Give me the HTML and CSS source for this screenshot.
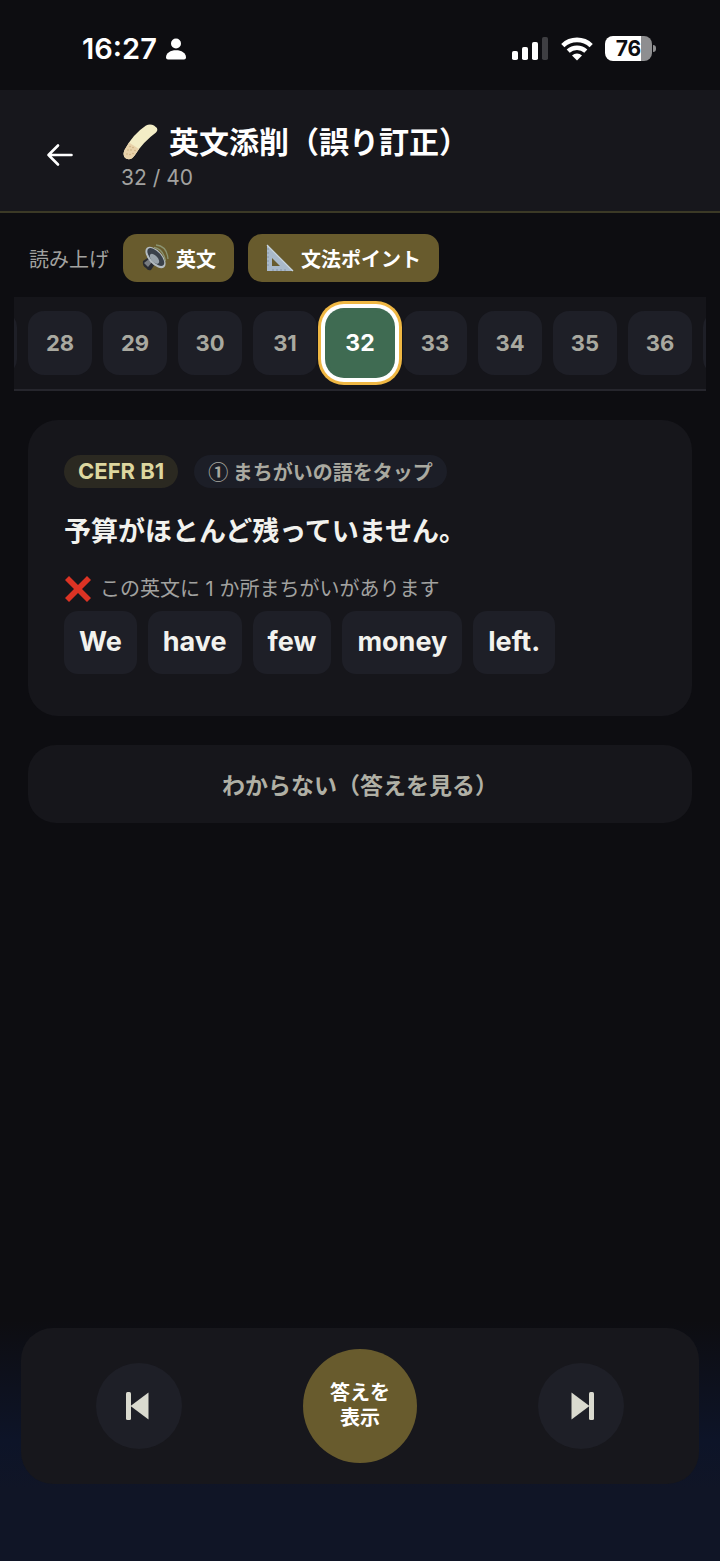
FILE: index.html
```html
<!DOCTYPE html>
<html lang="ja">
<head>
    <meta charset="UTF-8">
    <meta name="viewport" content="width=device-width, initial-scale=1.0">
    <title>英文添削（誤り訂正）</title>
    <link rel="stylesheet" href="styles.css">
</head>
<body>
    <!-- ステータスバー -->
    <div class="status-bar">
        <div class="status-left">
            <span class="clock">16:27</span>
            <svg width="20" height="22" viewBox="0 0 20 22" fill="#fff" aria-hidden="true">
                <circle cx="10" cy="5.5" r="5"/>
                <path d="M0 19.5C0 15 4.5 12.3 10 12.3S20 15 20 19.5Q20 21.5 18 21.5H2Q0 21.5 0 19.5Z"/>
            </svg>
        </div>
        <div class="status-right">
            <svg width="37" height="24" viewBox="0 0 37 24" fill="#fff" aria-hidden="true">
                <rect x="0" y="14" width="6" height="9" rx="1.8"/>
                <rect x="10" y="10" width="6" height="13" rx="1.8"/>
                <rect x="20" y="5" width="6" height="18" rx="1.8"/>
                <rect x="30" y="0" width="6" height="23" rx="1.8" fill="#3e3e42"/>
            </svg>
            <svg width="32" height="24" viewBox="0 0 32 24" aria-hidden="true">
                <path d="M1.8 8.6A20.5 20.5 0 0 1 30.2 8.6" fill="none" stroke="#fff" stroke-width="4.6"/>
                <path d="M7.2 14.2A12.8 12.8 0 0 1 24.8 14.2" fill="none" stroke="#fff" stroke-width="4.4"/>
                <path d="M11 18.4A7.2 7.2 0 0 1 21 18.4L16 23.4Z" fill="#fff"/>
            </svg>
            <div class="battery"><span class="battery-level">76</span></div>
        </div>
    </div>

    <header class="page-header">
        <button type="button" class="back-button" aria-label="戻る">
            <svg width="28" height="24" viewBox="0 0 28 24" fill="none" stroke="#fff" stroke-width="2.6" stroke-linecap="round" stroke-linejoin="round">
                <path d="M25.5 12H2.5M12 2.5L2.5 12L12 21.5"/>
            </svg>
        </button>
        <div class="header-text">
            <h1>
                <svg width="38" height="38" viewBox="0 0 38 38" aria-hidden="true">
                    <path d="M25 2.5Q29 .5 33 2.5Q38.5 6 35 9.5Q22 19 14 32Q10 38 5 35.5Q1 33 3.5 27Q12 11 25 2.5Z" fill="#f3edc6"/>
                    <path d="M8 19.5L18 26Q15.5 29.5 14 32Q10 38 5 35.5Q1 33 3.5 27Z" fill="#e8d2aa"/>
                    <g fill="#c4a878">
                        <circle cx="9" cy="23.5" r=".7"/><circle cx="14" cy="27.5" r=".7"/>
                        <circle cx="7" cy="27" r=".7"/><circle cx="12" cy="30.5" r=".7"/>
                        <circle cx="6" cy="31" r=".7"/><circle cx="10" cy="27" r=".7"/>
                        <circle cx="9" cy="31.5" r=".7"/><circle cx="12" cy="24.5" r=".7"/>
                    </g>
                </svg>
                英文添削（誤り訂正）
            </h1>
            <p class="progress">32 / 40</p>
        </div>
    </header>

    <main>
        <!-- 読み上げ -->
        <div class="speech-row">
            <span class="speech-label">読み上げ</span>
            <button type="button" class="speech-button">
                <svg width="28" height="28" viewBox="0 0 28 28" aria-hidden="true">
                    <path d="M2 17L8 13L14 20L10 26Q7 27 5 24Q1 22 2 17Z" fill="#292b30"/>
                    <path d="M3 19L8 15L11 18L7 23Z" fill="#777b80"/>
                    <ellipse cx="14.5" cy="13.5" rx="6.8" ry="13" transform="rotate(-42 14.5 13.5)" fill="#b4bcc1"/>
                    <ellipse cx="14.8" cy="13" rx="5.2" ry="11.2" transform="rotate(-42 14.8 13)" fill="#3a414a"/>
                    <ellipse cx="13.5" cy="14.8" rx="3.2" ry="6" transform="rotate(-42 13.5 14.8)" fill="#99a3aa"/>
                    <path d="M13 3.5Q22 4.5 24.5 17" fill="none" stroke="#8b9472" stroke-width="1.3"/>
                    <path d="M15 1Q26 2 27 15" fill="none" stroke="#8b9472" stroke-width="1.3"/>
                </svg>
                英文
            </button>
            <button type="button" class="speech-button">
                <svg width="28" height="28" viewBox="0 0 28 28" aria-hidden="true">
                    <path d="M1 1L27 27H1ZM6 14V22H14Z" fill="#a9b9ca" fill-rule="evenodd"/>
                    <path d="M1 1L27 27" stroke="#c9d5df" stroke-width="1.2"/>
                    <path d="M1 5H3M1 9H3M1 13H3M1 17H3M1 21H3M7 27V25M11 27V25M15 27V25M19 27V25" stroke="#7d8d9f" stroke-width=".8"/>
                </svg>
                文法ポイント
            </button>
        </div>

        <!-- 問題番号 -->
        <nav class="number-strip" aria-label="問題番号">
            <button type="button" class="number" aria-label="27"></button>
            <button type="button" class="number">28</button>
            <button type="button" class="number">29</button>
            <button type="button" class="number">30</button>
            <button type="button" class="number">31</button>
            <button type="button" class="number current" aria-current="true">32</button>
            <button type="button" class="number">33</button>
            <button type="button" class="number">34</button>
            <button type="button" class="number">35</button>
            <button type="button" class="number">36</button>
            <button type="button" class="number" aria-label="37"></button>
        </nav>

        <!-- 問題カード -->
        <section class="card">
            <div class="tags">
                <span class="tag level">CEFR B1</span>
                <span class="tag">① まちがいの語をタップ</span>
            </div>
            <h2>予算がほとんど残っていません。</h2>
            <p class="hint">
                <svg width="28" height="28" viewBox="0 0 28 28" aria-hidden="true">
                    <path d="M5 1L14 10L23 1L27 5L18 14L27 23L23 27L14 18L5 27L1 23L10 14L1 5Z" fill="#dc3324"/>
                </svg>
                この英文に 1 か所まちがいがあります
            </p>
            <div class="words">
                <button type="button" class="word">We</button>
                <button type="button" class="word">have</button>
                <button type="button" class="word">few</button>
                <button type="button" class="word">money</button>
                <button type="button" class="word">left.</button>
            </div>
        </section>

        <button type="button" class="give-up">わからない（答えを見る）</button>
    </main>

    <!-- 下部の操作バー -->
    <footer class="dock">
        <div class="controls">
            <button type="button" class="skip" aria-label="前の問題">
                <svg width="28" height="28" viewBox="0 0 28 28" fill="#dadacf">
                    <rect x="1" y="0" width="5" height="28" rx="1.5"/>
                    <path d="M23.5 .5V27.5L5.5 14Z"/>
                </svg>
            </button>
            <button type="button" class="show-answer">答えを<br>表示</button>
            <button type="button" class="skip" aria-label="次の問題">
                <svg width="28" height="28" viewBox="0 0 28 28" fill="#dadacf">
                    <rect x="22" y="0" width="5" height="28" rx="1.5"/>
                    <path d="M4.5 .5V27.5L22.5 14Z"/>
                </svg>
            </button>
        </div>
    </footer>
</body>
</html>
```
FILE: styles.css
```css
* {
    box-sizing: border-box;
}
body {
    font-family: Inter, 'Noto Sans CJK JP', sans-serif;
    margin: 0;
    min-height: 100vh;
    display: flex;
    flex-direction: column;
    background-color: #0d0d11;
    color: #f2f2ee;
}
h1, h2, p {
    margin: 0;
}
svg {
    display: block;
    flex: none;
}
button {
    font-family: inherit;
    border: none;
    padding: 0;
    cursor: pointer;
}

/* ステータスバー */
.status-bar {
    height: 90px;
    padding: 7px 68px 0 82px;
    display: flex;
    align-items: center;
    justify-content: space-between;
    color: #fff;
}
.status-left {
    display: flex;
    align-items: center;
    gap: 9px;
}
.status-right {
    display: flex;
    align-items: center;
    gap: 12px;
}
.clock {
    font-size: 29px;
    font-weight: 600;
}
.battery {
    position: relative;
    width: 47px;
    height: 25px;
    border-radius: 8px;
    background: linear-gradient(to right, #fff 77%, #8e8e90 77%);
    text-align: center;
}
.battery::after {
    content: "";
    position: absolute;
    right: -4px;
    top: 9px;
    width: 3px;
    height: 7px;
    border-radius: 0 3px 3px 0;
    background-color: #8e8e90;
}
.battery-level {
    display: block;
    font-size: 21px;
    font-weight: 700;
    line-height: 25px;
    color: #0d0d11;
}

/* ヘッダー */
.page-header {
    display: flex;
    align-items: center;
    gap: 33px;
    height: 123px;
    padding: 8px 32px 0 31px;
    background-color: #17171c;
    border-bottom: 2px solid #3b3926;
}
.back-button {
    width: 57px;
    height: 57px;
    display: flex;
    align-items: center;
    justify-content: center;
    background: none;
}
.header-text {
    padding-top: 6px;
}
h1 {
    display: flex;
    align-items: center;
    gap: 10px;
    font-size: 30px;
    font-weight: 700;
    line-height: 40px;
    color: #fff;
}
.progress {
    font-size: 21px;
    line-height: 32px;
    color: #a2a2a0;
}

/* 読み上げ */
main {
    padding: 21px 14px 0;
}
.speech-row {
    display: flex;
    align-items: center;
    gap: 14px;
    padding: 0 15px;
    margin-bottom: 15px;
}
.speech-label {
    font-size: 20px;
    color: #a2a2a0;
}
.speech-button {
    display: flex;
    align-items: center;
    gap: 7px;
    height: 48px;
    padding: 0 18px;
    border-radius: 14px;
    background-color: #685b2d;
    color: #fff;
    font-size: 20px;
    font-weight: 700;
}

/* 問題番号 */
.number-strip {
    display: flex;
    justify-content: center;
    gap: 11px;
    padding: 14px 0;
    background-color: #15151a;
    border-bottom: 2px solid #26262d;
    overflow: hidden;
}
.number {
    flex: none;
    width: 64px;
    height: 64px;
    border-radius: 16px;
    background-color: #1e1f27;
    color: #a9a9a0;
    font-size: 22px;
    font-weight: 700;
}
.number.current {
    position: relative;
    z-index: 1;
    background-color: #3f6b52;
    color: #fff;
    font-size: 23px;
    box-shadow: 0 0 0 3px #3f6b52, 0 0 0 7px #fff, 0 0 0 10px #efb743;
}

/* 問題カード */
.card {
    margin: 29px 14px;
    padding: 35px 36px 42px;
    border-radius: 30px;
    background-color: #16161b;
}
.tags {
    display: flex;
    gap: 16px;
}
.tag {
    padding: 0 14px;
    border-radius: 17px;
    background-color: #1c1e27;
    color: #a9a9a0;
    font-family: 'Noto Sans CJK JP', sans-serif;
    font-size: 20px;
    font-weight: 700;
    line-height: 33px;
}
.tag.level {
    background-color: #2b2921;
    color: #ddd79f;
    font-family: Inter, sans-serif;
    font-size: 22px;
}
h2 {
    margin-top: 24px;
    font-size: 27px;
    font-weight: 700;
    line-height: 40px;
}
.hint {
    display: flex;
    align-items: center;
    gap: 8px;
    margin-top: 23px;
    font-size: 20px;
    line-height: 28px;
    color: #a2a2a0;
}
.words {
    display: flex;
    flex-wrap: wrap;
    gap: 11px;
    margin-top: 8px;
}
.word {
    height: 63px;
    padding: 0 15px 2px;
    border-radius: 14px;
    background-color: #1e1f27;
    color: #f2f2ee;
    font-size: 27px;
    font-weight: 700;
}
.give-up {
    display: block;
    width: calc(100% - 28px);
    height: 78px;
    margin: 0 14px;
    border-radius: 28px;
    background-color: #16161b;
    color: #b0b0a5;
    font-size: 23px;
    font-weight: 700;
}

/* 下部の操作バー */
.dock {
    margin-top: auto;
    padding: 7px 21px 77px;
    background: linear-gradient(to bottom, #0d0d11, #0d1428 50%, #101526 70%);
}
.controls {
    display: flex;
    align-items: center;
    justify-content: space-between;
    padding: 21px 75px;
    border-radius: 32px;
    background-color: #17171c;
}
.skip {
    display: flex;
    align-items: center;
    justify-content: center;
    width: 86px;
    height: 86px;
    border-radius: 50%;
    background-color: #1e1f27;
}
.show-answer {
    width: 114px;
    height: 114px;
    border-radius: 50%;
    background-color: #685b2d;
    color: #fff;
    font-size: 20px;
    font-weight: 700;
    line-height: 25px;
}
```
